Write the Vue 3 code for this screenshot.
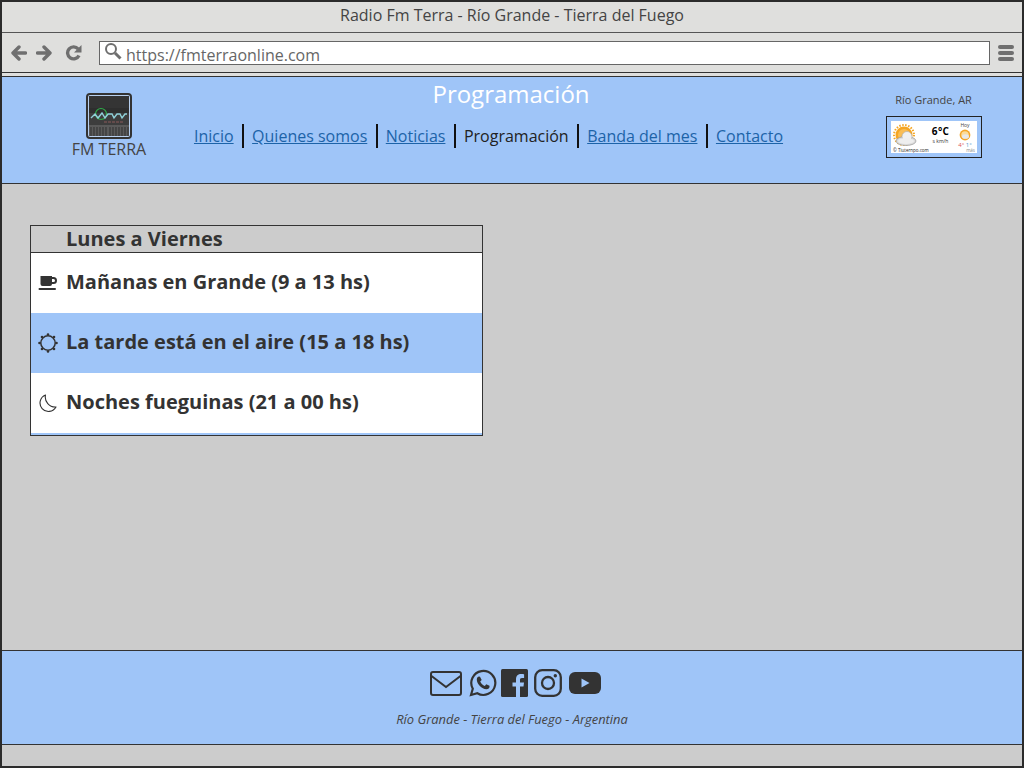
<script setup>
const links = [
  { t: 'Inicio', a: true },
  { t: 'Quienes somos', a: true },
  { t: 'Noticias', a: true },
  { t: 'Programación', a: false },
  { t: 'Banda del mes', a: true },
  { t: 'Contacto', a: true }
]
</script>

<template>
  <div class="frame">
    <div class="title">Radio Fm Terra - Río Grande - Tierra del Fuego</div>
    <div class="toolbar">
      <svg class="nav" width="16" height="16" viewBox="0 0 16 16"><path d="M8 2 2 8l6 6M3 8h11.500" fill="none" stroke="#6f6f6f" stroke-width="3.400" stroke-linecap="round" stroke-linejoin="round"/></svg>
      <svg class="nav n2" width="16" height="16" viewBox="0 0 16 16"><path d="M8 2l6 6-6 6M13 8H1.500" fill="none" stroke="#6f6f6f" stroke-width="3.400" stroke-linecap="round" stroke-linejoin="round"/></svg>
      <svg class="nav n3" width="17" height="17" viewBox="0 0 17 17"><path d="M14 11.500a6 6 0 1 1-.8-6.500" fill="none" stroke="#6f6f6f" stroke-width="3.400"/><path d="M16.500 1v7.500H9z" fill="#6f6f6f"/></svg>
      <div class="url">
        <svg class="lens" width="18" height="18" viewBox="0 0 18 18"><circle cx="7" cy="7" r="5" fill="none" stroke="#6f6f6f" stroke-width="2"/><path d="M11 11l5.500 5.500" stroke="#6f6f6f" stroke-width="3"/></svg>
        <span>https://fmterraonline.com</span>
      </div>
      <div class="menu"><i></i><i></i><i></i></div>
    </div>
    <div class="gap"></div>
    <header class="head">
      <div class="brand">
        <div class="logo">
          <svg width="40" height="40" viewBox="0 0 40 40">
            <rect width="40" height="40" fill="#3d3d3d"/>
            <rect width="40" height="12" fill="#343434"/>
            <rect y="12" width="40" height="5" fill="#2e2e2e"/>
            <rect y="29" width="40" height="11" fill="#5a5a5a"/>
            <path d="M2 31v9M5 31v9M8 31v9M11 31v9M14 31v9M17 31v9M21 31v9M24 31v9M27 31v9M30 31v9M33 31v9M36 31v9M39 31v9" stroke="#383838" stroke-width="1.200"/>
            <circle cx="12" cy="18" r="5.500" fill="none" stroke="#2fae4a" stroke-width="1.200"/>
            <path d="M2 22l4-4 3 4 4-5 3 5 3-4h4l2 4 3-4h3l2 4 3-4h2" fill="none" stroke="#8fd0d8" stroke-width="1.400"/>
            <path d="M15 26h19" stroke="#8a5a5a" stroke-width="1.200" stroke-dasharray="3 1"/>
          </svg>
        </div>
        <div class="bname">FM TERRA</div>
      </div>
      <div class="center">
        <h1>Programación</h1>
        <nav>
          <template v-for="l in links" :key="l.t">
            <a v-if="l.a" href="#">{{ l.t }}</a>
            <span v-else>{{ l.t }}</span>
          </template>
        </nav>
      </div>
      <div class="weather">
        <div class="place">Río Grande, AR</div>
        <div class="wbox">
          <div class="winner">
            <svg class="wsun" width="24" height="24" viewBox="0 0 24 24">
              <circle cx="11" cy="11" r="10" fill="none" stroke="#f5a623" stroke-dasharray="1.500 1.500" stroke-width="2"/>
              <circle cx="11" cy="11" r="8.500" fill="#f5a623"/>
              <circle cx="11" cy="11" r="6" fill="#f9bd55"/>
              <ellipse cx="13" cy="17" rx="10" ry="4.500" fill="#dcdcdc" stroke="#999" stroke-width=".7"/>
              <circle cx="14" cy="12.500" r="5" fill="#f0f0f0" stroke="#aaa" stroke-width=".6"/>
              <ellipse cx="13" cy="17" rx="8" ry="3" fill="#eeeeee"/>
            </svg>
            <div class="temp"><b>6°C</b><small>s km/h</small></div>
            <div class="fore">
              <small>Hoy</small>
              <svg width="12" height="12" viewBox="0 0 12 12"><circle cx="6" cy="6" r="5.400" fill="#f4a62a"/><circle cx="6" cy="6" r="3.800" fill="#fbdc9c"/><ellipse cx="6.500" cy="7.500" rx="3.500" ry="2.300" fill="#e8e8e8"/></svg>
              <div class="mm"><em>4°</em> <s>1°</s></div>
            </div>
            <div class="wsrc">© Tiuternpo.com</div>
            <div class="wsrc r">más</div>
          </div>
        </div>
      </div>
    </header>
    <main class="main">
      <section class="card">
        <h2>Lunes a Viernes</h2>
        <div class="row">
          <span class="ic">
            <svg width="20" height="18" viewBox="0 0 20 18"><path d="M2.500 2h11.500v1h1.500a3.500 3.500 0 0 1 0 7H14a2 2 0 0 1-2 2H4.500a2 2 0 0 1-2-2z" fill="#333"/><path d="M14 5h1.500a1.300 1.300 0 0 1 0 3H14z" fill="#fff"/><rect x="0.500" y="14" width="17.500" height="2" rx="1" fill="#333"/></svg>
          </span>
          <span>Mañanas en Grande (9 a 13 hs)</span>
        </div>
        <div class="row blue">
          <span class="ic">
            <svg width="20" height="20" viewBox="0 0 20 20"><circle cx="10" cy="10" r="7.200" fill="none" stroke="#333" stroke-width="1.500"/><g fill="#333"><circle cx="10" cy="1.500" r="1.300"/><circle cx="10" cy="18.500" r="1.300"/><circle cx="1.500" cy="10" r="1.300"/><circle cx="18.500" cy="10" r="1.300"/><circle cx="4" cy="4" r="1.300"/><circle cx="16" cy="4" r="1.300"/><circle cx="4" cy="16" r="1.300"/><circle cx="16" cy="16" r="1.300"/></g></svg>
          </span>
          <span>La tarde está en el aire (15 a 18 hs)</span>
        </div>
        <div class="row">
          <span class="ic">
            <svg class="moon" width="18" height="18" viewBox="0 0 18 18"><path d="M6.500 1A8.500 8.500 0 1 0 17 13 10 10 0 0 1 6.500 1z" fill="none" stroke="#333" stroke-width="1.100" stroke-linejoin="round"/></svg>
          </span>
          <span>Noches fueguinas (21 a 00 hs)</span>
        </div>
      </section>
    </main>
    <footer class="foot">
      <div class="social">
        <svg width="32" height="25" viewBox="0 0 32 25"><rect x="1" y="1" width="30" height="23" rx="2" fill="none" stroke="#333" stroke-width="2"/><path d="M1.500 5 16 16 30.500 5" fill="none" stroke="#333" stroke-width="2"/></svg>
        <svg class="s-wa" width="28" height="28" viewBox="0 0 28 28"><path d="M2 26l1.800-6.300A12 12 0 1 1 8.300 24.300z" fill="none" stroke="#333" stroke-width="2.200"/><path d="M10 7.500c-1 0-2.200 1.200-2.200 3 0 4.500 5 9.500 9.500 9.800 2 .1 3.200-1.200 3.200-2.500v-1l-3.200-1.600-1.500 1.700c-2-.7-3.700-2.400-4.600-4.500l1.500-1.500L11 7.700z" fill="#333"/></svg>
        <svg class="s-fb" width="27" height="28" viewBox="0 0 27 28"><rect width="27" height="28" rx="1.500" fill="#333"/><path d="M19 28V17.500h3.500l.5-4h-4V11c0-1.200.4-2 2-2h2.100V5.300c-.4 0-1.600-.2-3-.2-3 0-5.100 1.800-5.100 5.200v3.200H11.500v4H15V28z" fill="#9fc5f8"/></svg>
        <svg class="s-ig" width="28" height="28" viewBox="0 0 28 28"><rect x="1.200" y="1.200" width="25.600" height="25.600" rx="7" fill="none" stroke="#333" stroke-width="2.300"/><circle cx="14" cy="14" r="6" fill="none" stroke="#333" stroke-width="2.300"/><circle cx="21.300" cy="6.700" r="1.700" fill="#333"/></svg>
        <svg class="s-yt" width="32" height="22" viewBox="0 0 32 22"><rect width="32" height="22" rx="6" fill="#333"/><path d="M12.500 6.500v9l8-4.500z" fill="#9fc5f8"/></svg>
      </div>
      <div class="loc">Río Grande - Tierra del Fuego - Argentina</div>
    </footer>
    <div class="tail"></div>
  </div>
</template>

<style>
html, body { margin: 0; }
</style>

<style scoped>
.frame {
  box-sizing: border-box;
  width: 1024px;
  height: 768px;
  display: flex;
  flex-direction: column;
  border: 2px solid #2b2b2b;
  background: #ccc;
  font-family: "Open Sans", sans-serif;
  color: #333;
  overflow: hidden;
}
.title {
  height: 31px;
  flex: none;
  box-sizing: border-box;
  background: #dfdfdd;
  text-align: center;
  font-size: 16px;
  line-height: 26px;
  color: #444;
  border-bottom: 1px solid #555;
}
.toolbar {
  height: 40px;
  flex: none;
  box-sizing: border-box;
  background: #dfdfdd;
  border-bottom: 1px solid #333;
  display: flex;
  align-items: center;
  padding: 0 0 0 9px;
}
.gap { height: 3px; flex: none; background: #dfdfdd; }
.nav { flex: none; }
.n2 { margin-left: 9px; }
.n3 { margin-left: 13px; }
.url {
  margin-left: 17px;
  margin-top: 1px;
  width: 891px;
  height: 24px;
  flex: none;
  box-sizing: border-box;
  border: 1px solid #666;
  background: #fff;
  display: flex;
  align-items: center;
  font-size: 16px;
  color: #666;
  padding-left: 4px;
  gap: 4px;
}
.lens { margin-top: -4px; flex: none; }
.url span { line-height: 18px; margin-top: 3px; }
.menu { margin-left: 8px; display: flex; flex-direction: column; gap: 2px; }
.menu i { display: block; width: 16px; height: 4px; border-radius: 2px; background: #6f6f6f; }
.head {
  height: 108px;
  flex: none;
  box-sizing: border-box;
  background: #9fc5f8;
  border-top: 1px solid #333;
  border-bottom: 1px solid #333;
  display: flex;
}
.brand {
  width: 214px;
  flex: none;
  display: flex;
  flex-direction: column;
  align-items: center;
  padding-top: 16px;
}
.logo {
  width: 46px;
  height: 46px;
  box-sizing: border-box;
  border: 2px solid #333;
  border-radius: 4px;
  background: #b7cfee;
  padding: 1px;
}
.logo svg { display: block; }
.bname { font-size: 16px; line-height: 22px; color: #444; margin-top: -1px; }
.center { flex: none; width: 590px; text-align: center; }
h1 {
  margin: 0;
  font-weight: 400;
  font-size: 24px;
  line-height: 34px;
  color: #fff;
}
nav { display: flex; justify-content: center; margin-top: 13px; margin-left: -44.500px; }
nav a, nav span {
  font-size: 16px;
  line-height: 24px;
  padding: 0 8.500px 0 8px;
  border-right: 2px solid #111;
}
nav > :last-child { border-right: none; }
nav a { color: #1c63a8; text-decoration: underline; }
nav span { color: #222; }
.weather {
  width: 176px;
  margin-left: 40px;
  flex: none;
  display: flex;
  flex-direction: column;
  align-items: center;
  padding-top: 14px;
}
.place { font-size: 11px; line-height: 18px; color: #444; margin-left: -1px; }
.wbox {
  margin-top: 7px;
  width: 96px;
  height: 42px;
  flex: none;
  box-sizing: border-box;
  border: 1px solid #222;
  padding: 4px;
}
.winner {
  position: relative;
  width: 86px;
  height: 32px;
  background: #fff;
}
.wsun { position: absolute; left: 2px; top: 3px; }
.temp { position: absolute; left: 39px; top: 5px; width: 21px; text-align: center; }
.temp b { display: block; font-size: 10px; line-height: 10px; letter-spacing: .3px; color: #000; }
.temp small { display: block; font-size: 5px; line-height: 6px; color: #333; margin-top: 2px; }
.fore { position: absolute; left: 65px; top: 0; width: 18px; text-align: center; line-height: 1; }
.fore small { display: block; font-size: 5px; height: 8px; line-height: 8px; color: #444; }
.fore svg { display: block; margin: 0 auto; }
.mm { font-size: 6px; margin-top: 1px; }
.mm em { color: #d55; font-style: normal; }
.mm s { color: #59c; text-decoration: none; }
.wsrc { position: absolute; left: 2px; bottom: 0; font-size: 4.500px; line-height: 6px; color: #222; }
.wsrc.r { left: auto; right: 2px; color: #888; }
.main { flex: 1; padding: 41px 0 0 28px; border-bottom: 1px solid #333; }
.card {
  width: 453px;
  box-sizing: border-box;
  border: 1px solid #333;
  background: #9fc5f8;
  padding-bottom: 2px;
}
h2 {
  margin: 0;
  background: #ccc;
  border-bottom: 1px solid #333;
  font-size: 20px;
  line-height: 26px;
  font-weight: 700;
  padding-left: 35px;
  color: #333;
}
.row {
  height: 60px;
  box-sizing: border-box;
  padding-bottom: 4px;
  display: flex;
  align-items: center;
  font-size: 20px;
  font-weight: 700;
  color: #333;
  background: #fff;
}
.row.blue { background: #9fc5f8; }
.ic { width: 35px; flex: none; display: flex; padding-left: 7px; padding-top: 4px; box-sizing: border-box; }
.moon { margin-left: 1px; }
.foot {
  height: 94px;
  flex: none;
  box-sizing: border-box;
  background: #9fc5f8;
  border-bottom: 1px solid #333;
  text-align: center;
}
.social { display: flex; justify-content: center; align-items: center; padding-top: 18px; padding-left: 7px; height: 28px; }
.s-wa { margin-left: 7px; }
.s-fb { margin-left: 4px; }
.s-ig { margin-left: 6px; }
.s-yt { margin-left: 7px; }
.loc { font-style: italic; font-size: 12.900px; line-height: 18px; margin-top: 13px; color: #444; }
.tail { height: 21px; flex: none; background: #ccc; }
</style>
